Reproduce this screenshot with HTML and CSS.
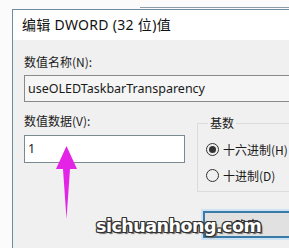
FILE: index.html
```html
<!DOCTYPE html>
<html>
<head>
<meta charset="utf-8">
<link rel="stylesheet" href="styles.css">
</head>
<body>
<div class="backdrop">
  <div class="backdrop-line"></div>
</div>
<div class="dialog">
  <div class="titlebar">编辑 DWORD (32 位)值</div>
  <div class="content">
    <div class="label">数值名称(N):</div>
    <div class="field readonly">useOLEDTaskbarTransparency</div>
    <div class="row">
      <div class="col">
        <div class="label">数值数据(V):</div>
        <div class="field data">1</div>
      </div>
      <fieldset class="group">
        <legend>基数</legend>
        <div class="radio"><span class="dot checked"></span>十六进制(H)</div>
        <div class="radio"><span class="dot"></span>十进制(D)</div>
      </fieldset>
    </div>
    <div class="buttons">
      <div class="btn">确定</div>
    </div>
  </div>
</div>
<svg class="arrow" width="22" height="74" viewBox="0 0 22 74">
  <path d="M10.5 0 L21 23 L14 23 L10.5 73 L7 23 L0 23 Z" fill="#e324e6"/>
</svg>
<div class="watermark">sichuanhong.com</div>
</body>
</html>
```

FILE: styles.css
```css
html, body {
  margin: 0;
  padding: 0;
}
body {
  width: 289px;
  height: 248px;
  overflow: hidden;
  background: #fbfbfb;
  position: relative;
  font-family: "Noto Sans", "Noto Sans CJK SC", sans-serif;
  color: #1a1a1a;
}
.backdrop {
  height: 9px;
  position: relative;
}
.backdrop-line {
  position: absolute;
  left: 140px;
  right: 0;
  top: 7px;
  height: 1px;
  background: #8c9ca8;
}
.dialog {
  margin-left: 12px;
  width: 320px;
  border-left: 1px solid #6e8d9c;
  border-top: 1px solid #6e8d9c;
}
.titlebar {
  height: 30px;
  background: #ffffff;
  padding-left: 9px;
  font-size: 14px;
  letter-spacing: 0.3px;
  line-height: 30px;
  font-family: "Noto Sans", "Noto Sans CJK SC", sans-serif;
  color: #111;
}
.content {
  background: #f0f0f0;
  padding: 13px 0 40px 11px;
}
.label {
  font-size: 12px;
  line-height: 18px;
  font-family: "Noto Sans CJK SC", sans-serif;
  color: #1a1a1a;
}
.field {
  box-sizing: border-box;
  height: 27px;
  border: 1px solid #7a7a7a;
  font-size: 12.5px;
  line-height: 25px;
  padding-left: 3px;
  margin-top: 4px;
}
.field.readonly {
  background: #f5f5f5;
  border-color: #8a8a8a;
  width: 320px;
}
.field.data {
  background: #ffffff;
  width: 161px;
  height: 28px;
  line-height: 26px;
  border-color: #7a8a90;
  margin-top: 5px;
}
.row {
  display: flex;
  align-items: flex-start;
  margin-top: 10px;
  gap: 12px;
}
.col {
  display: flex;
  flex-direction: column;
}
.group {
  margin: 4px 0 0 0;
  padding: 11px 0 8px 8px;
  width: 120px;
  border: 1px solid #dcdcdc;
  font-family: "Noto Sans CJK SC", sans-serif;
  font-size: 12px;
}
.group legend {
  padding: 0 2px;
  margin-left: 2px;
  line-height: 14px;
}
.radio {
  display: flex;
  align-items: center;
  gap: 4px;
  height: 16px;
  margin-bottom: 10px;
  white-space: nowrap;
  color: #1a1a1a;
}
.radio:last-child {
  margin-bottom: 0;
}
.dot {
  box-sizing: border-box;
  width: 13px;
  height: 13px;
  border: 1px solid #333;
  border-radius: 50%;
  display: flex;
  align-items: center;
  justify-content: center;
  flex: none;
}
.dot.checked::after {
  content: "";
  width: 7px;
  height: 7px;
  border-radius: 50%;
  background: #333;
}
.buttons {
  display: flex;
  padding-left: 179px;
  margin-top: 19px;
}
.btn {
  box-sizing: border-box;
  width: 90px;
  height: 27px;
  background: #e1e1e1;
  border: 2px solid #3a7aa8;
  box-shadow: 0 0 0 2px #cde3f4;
  font-family: "Noto Sans CJK SC", sans-serif;
  font-size: 12px;
  line-height: 23px;
  padding-left: 30px;
}
.arrow {
  position: absolute;
  left: 56px;
  top: 146px;
}
.watermark {
  position: absolute;
  left: 96px;
  top: 216px;
  font-family: "DejaVu Sans", sans-serif;
  font-weight: bold;
  font-size: 17.5px;
  letter-spacing: -0.5px;
  color: #ffffff;
  text-shadow: 1px 0 0 #333, -1px 0 0 #333, 0 1px 0 #333, 0 -1px 0 #333,
    1px 1px 0 #333, -1px -1px 0 #333, 1px -1px 0 #333, -1px 1px 0 #333,
    2px 2px 1px #666;
}
```
